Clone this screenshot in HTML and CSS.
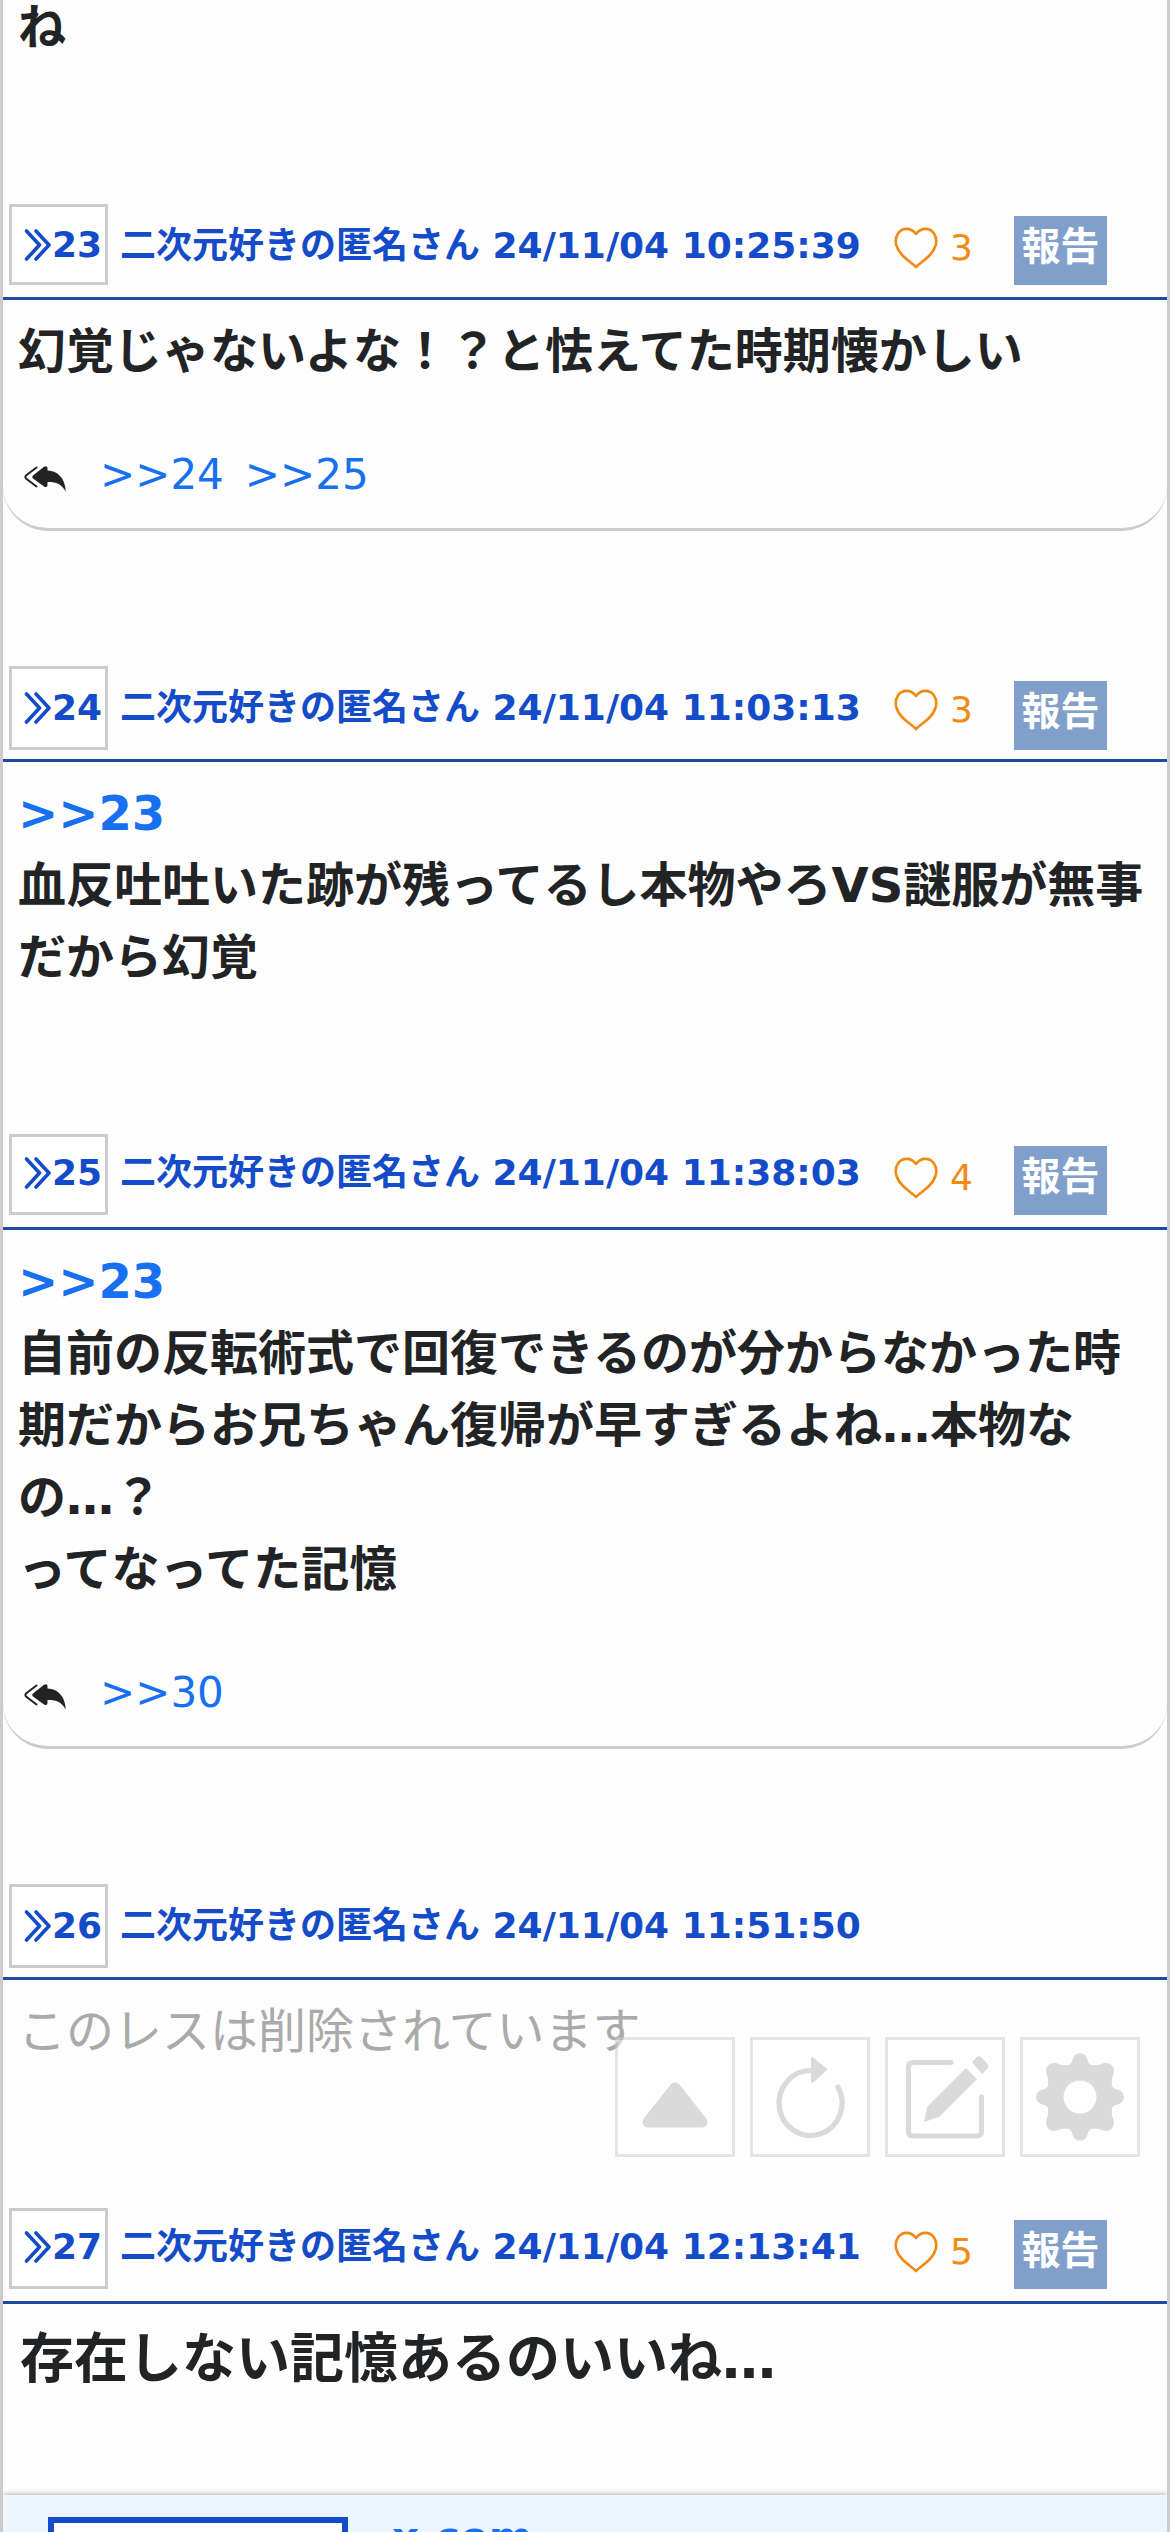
FILE: index.html
```
<!DOCTYPE html>
<html lang="ja">
<head>
<meta charset="utf-8">
<title>スレッド</title>
<link rel="stylesheet" href="styles.css">
</head>
<body>
<svg class="defs" aria-hidden="true">
  <symbol id="chev" viewBox="0 0 28 32"><path d="M2.500 2 15.500 16 2.500 30M12 2 25 16 12 30" fill="none" stroke="currentColor" stroke-width="3.600" stroke-linecap="round" stroke-linejoin="round"/></symbol>
  <symbol id="heart" viewBox="0 0 44 42"><path d="M22 7C17 0 8 .5 4 6.500C-1 14 3 23 9 29C13 33 18 36 22 40C26 36 31 33 35 29C41 23 45 14 40 6.500C36 .5 27 0 22 7Z" fill="none" stroke="currentColor" stroke-width="2.600" stroke-linejoin="round"/></symbol>
  <symbol id="reply" viewBox="0 0 42 26"><path d="M12.500 1.500 2 9.500Q.8 11 2 12.500L12.500 20.500" fill="none" stroke="currentColor" stroke-width="2" stroke-linecap="round"/><path d="M9 9.500 20 .8Q23.500-1 23.500 2V4.500C34 5 41 12 41.800 25.500C37 17 31 16 23.500 16V19Q23.500 22 20 20.500L9 12.500Q7.500 11 9 9.500Z" fill="currentColor"/></symbol>
</svg>
<main class="thread">
  <p class="body tail">ね</p>

  <article class="post p23">
    <header class="head">
      <a class="num"><svg class="chev"><use href="#chev"/></svg>23</a>
      <span class="name">二次元好きの匿名さん 24/11/04 10:25:39</span>
      <span class="like"><svg class="heart"><use href="#heart"/></svg>3</span>
      <span class="report">報告</span>
    </header>
    <p class="body">幻覚じゃないよな！？と怯えてた時期懐かしい</p>
    <footer class="replies"><svg class="reply"><use href="#reply"/></svg><a>&gt;&gt;24</a><a>&gt;&gt;25</a></footer>
  </article>

  <article class="post p24">
    <header class="head tall">
      <a class="num"><svg class="chev"><use href="#chev"/></svg>24</a>
      <span class="name">二次元好きの匿名さん 24/11/04 11:03:13</span>
      <span class="like"><svg class="heart"><use href="#heart"/></svg>3</span>
      <span class="report">報告</span>
    </header>
    <p class="body"><a>&gt;&gt;23</a><br>血反吐吐いた跡が残ってるし本物やろVS謎服が無事<br>だから幻覚</p>
  </article>

  <article class="post p25">
    <header class="head raised">
      <a class="num"><svg class="chev"><use href="#chev"/></svg>25</a>
      <span class="name">二次元好きの匿名さん 24/11/04 11:38:03</span>
      <span class="like"><svg class="heart"><use href="#heart"/></svg>4</span>
      <span class="report">報告</span>
    </header>
    <p class="body"><a>&gt;&gt;23</a><br>自前の反転術式で回復できるのが分からなかった時<br>期だからお兄ちゃん復帰が早すぎるよね…本物な<br>の…？<br>ってなってた記憶</p>
    <footer class="replies"><svg class="reply"><use href="#reply"/></svg><a>&gt;&gt;30</a></footer>
  </article>

  <article class="post p26">
    <header class="head tall">
      <a class="num"><svg class="chev"><use href="#chev"/></svg>26</a>
      <span class="name">二次元好きの匿名さん 24/11/04 11:51:50</span>
    </header>
    <p class="body deleted">このレスは削除されています</p>
  </article>

  <article class="post p27">
    <header class="head raised">
      <a class="num"><svg class="chev"><use href="#chev"/></svg>27</a>
      <span class="name">二次元好きの匿名さん 24/11/04 12:13:41</span>
      <span class="like"><svg class="heart"><use href="#heart"/></svg>5</span>
      <span class="report">報告</span>
    </header>
    <p class="body large">存在しない記憶あるのいいね…</p>
  </article>

  <aside class="card"><div class="thumb"></div><a class="site">x.com</a></aside>
</main>

<nav class="tools">
  <button class="tool"><svg viewBox="0 0 114 114"><path d="M57 48 30 82H84Z" fill="currentColor" stroke="currentColor" stroke-width="11" stroke-linejoin="round"/></svg></button>
  <button class="tool"><svg viewBox="0 0 114 114"><path d="M58 30.500A31.500 32.500 0 1 0 85 47" fill="none" stroke="currentColor" stroke-width="5.200" stroke-linecap="round"/><path d="M59 18 73.500 29.500 59 42Z" fill="currentColor" stroke="currentColor" stroke-width="2" stroke-linejoin="round"/></svg></button>
  <button class="tool"><svg viewBox="0 0 114 114"><path d="M63 22.500H25Q20.500 22.500 20.500 27V91Q20.500 96 25 96H89Q93.500 96 93.500 91V57" fill="none" stroke="currentColor" stroke-width="5" stroke-linecap="round"/><path d="M78 28 89 39 51 77 36 82 39 67ZM84 22 89 17Q91 15.500 93 17L100 24.500Q101 26 100 28L94 34Z" fill="currentColor"/></svg></button>
  <button class="tool"><svg viewBox="0 0 114 114">
    <g fill="currentColor" shape-rendering="geometricPrecision">
      <path d="M43 25C47 26 49 23 50 18A7.500 7.500 0 0 1 64 18C65 23 67 26 71 25C76 26 79 23 83 23A8 8 0 0 1 91 31C91 35 88 38 89 43C88 47 91 49 96 50A7.500 7.500 0 0 1 96 64C91 65 88 67 89 71C88 76 91 79 91 83A8 8 0 0 1 83 91C79 91 76 88 71 89C67 88 65 91 64 96A7.500 7.500 0 0 1 50 96C49 91 47 88 43 89C38 88 35 91 31 91A8 8 0 0 1 23 83C23 79 26 76 25 71C26 67 23 65 18 64A7.500 7.500 0 0 1 18 50C23 49 26 47 25 43C26 38 23 35 23 31A8 8 0 0 1 31 23C35 23 38 26 43 25Z"/>
    </g>
    <circle cx="57" cy="57" r="16.500" fill="#fff"/></svg></button>
</nav>
</body>
</html>
```
FILE: styles.css
```
* { box-sizing: border-box; }
body {
  margin: 0;
  position: relative;
  height: 2532px;
  overflow: hidden;
  background: #fdfdfd;
  color: #212325;
  font-family: "DejaVu Sans", "Noto Sans CJK JP", sans-serif;
}
a { color: #1670f0; text-decoration: none; }
.defs { display: none; }
.thread {
  height: 2532px;
  overflow: hidden;
  display: flex;
  flex-direction: column;
  border: solid #ccc;
  border-width: 0 3px;
}
.body {
  margin: 0;
  padding: 15px 15px 0;
  font-size: 48px;
  line-height: 72px;
  font-weight: 700;
  white-space: nowrap;
}
.thread > .tail { height: 204px; padding-top: 0; margin-top: -9px; flex: none; }
.post { flex: none; }
.p23 { height: 462px; margin-top: 9px; }
.p24 { height: 468px; }
.p25 { height: 750px; }
.p26 { height: 324px; }
.p27 { height: 287px; }
.head {
  height: 96px;
  display: flex;
  align-items: flex-start;
  border-bottom: 3px solid #1d4ba3;
  padding-left: 6px;
  font-size: 36px;
  line-height: 54px;
}
.num {
  width: 99px;
  height: 81px;
  flex: none;
  display: flex;
  align-items: center;
  border: 3px solid #ccc;
  background: #fff;
  color: #134bc8;
  font-weight: 700;
  padding: 1px 0 0 12px;
}
.tall .num { height: 84px; padding: 0 0 1px 12px; }
.raised .num { padding: 0 0 4px 12px; }
.chev { width: 28px; height: 32px; flex: none; }
.name {
  margin: 15px 0 0 12px;
  width: 774px;
  flex: none;
  color: #134bc8;
  font-weight: 700;
  white-space: nowrap;
}
.raised .name { margin-top: 12px; }
.like {
  width: 120px;
  display: flex;
  flex: none;
  color: #ef8b14;
  padding-top: 17px;
}
.heart { width: 44px; height: 42px; margin: 6px 12px 0 0; }
.report {
  width: 93px;
  height: 69px;
  margin-top: 12px;
  background: #809fcb;
  color: #fff;
  font-size: 39px;
  line-height: 61px;
  font-weight: 700;
  text-align: center;
}
.tall .report { margin-top: 15px; }
.replies {
  display: flex;
  height: 93px;
  margin-top: 51px;
  padding: 5px 21px 0;
  border-bottom: 3px solid #ccc;
  border-radius: 0 0 45px 45px;
  font-size: 42px;
  line-height: 63px;
}
.replies a { margin-right: 21px; }
.reply { width: 42px; height: 26px; margin: 23px 34px 0 0; }
.deleted { color: #aaa; font-weight: 400; }
.large { padding-left: 17px; font-size: 54px; line-height: 81px; }
.card {
  flex: none;
  height: 120px;
  display: flex;
  padding: 22px 45px;
  background: #ecf6fe;
  box-shadow: 0 0 6px rgba(0, 0, 0, .4);
}
.thumb { width: 300px; height: 180px; border: 6px solid #134bc8; background: #fff; }
.site { margin-left: 44px; font-size: 42px; line-height: 42px; font-weight: 700; }
.tools {
  position: absolute;
  left: 615px;
  top: 2037px;
  display: flex;
  gap: 15px;
}
.tool {
  width: 120px;
  height: 120px;
  padding: 0;
  border: 3px solid #ccc;
  background: #fff;
  color: #b8b8b8;
  opacity: .5;
}
.tool svg { display: block; width: 114px; height: 114px; }
```
